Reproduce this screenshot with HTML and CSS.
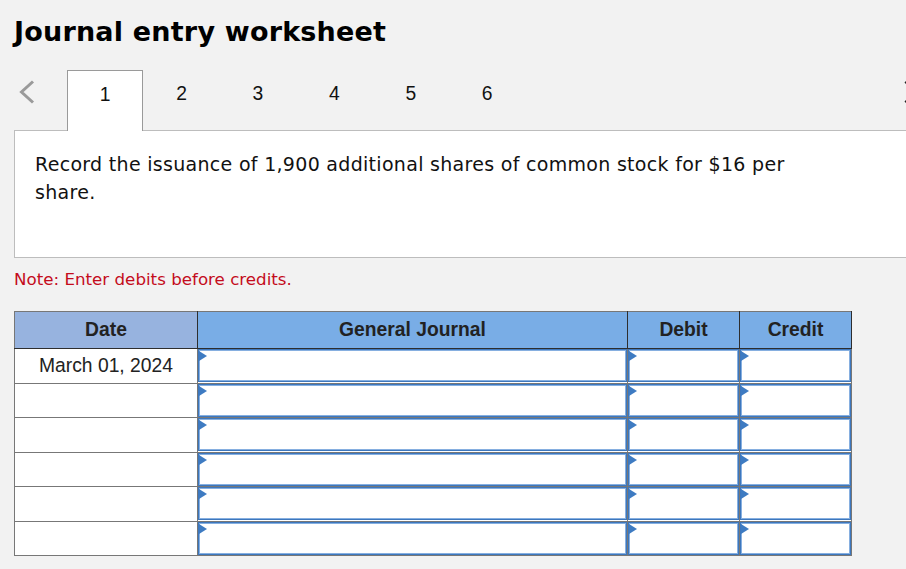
FILE: index.html
```html
<!DOCTYPE html>
<html>
<head>
<meta charset="utf-8">
<title>Journal entry worksheet</title>
<link rel="stylesheet" href="styles.css">
</head>
<body>
<div class="page">
  <h1 class="title">Journal entry worksheet</h1>
  <div class="tabs">
    <div class="nav nav-prev">
      <svg width="16" height="24" viewBox="0 0 16 24"><polyline points="14,1.5 2.5,12 14,22.5" fill="none" stroke="#9a9a9a" stroke-width="3"/></svg>
    </div>
    <div class="tab active">1</div>
    <div class="tab">2</div>
    <div class="tab">3</div>
    <div class="tab">4</div>
    <div class="tab">5</div>
    <div class="tab">6</div>
    <div class="nav nav-next">
      <svg width="16" height="24" viewBox="0 0 16 24"><polyline points="1.5,1.5 13,12 1.5,22.5" fill="none" stroke="#222" stroke-width="3"/></svg>
    </div>
  </div>
  <div class="question">
    <p class="question-text">Record the issuance of 1,900 additional shares of common stock for $16 per share.</p>
  </div>
  <p class="note">Note: Enter debits before credits.</p>
  <table class="journal">
    <colgroup>
      <col class="c-date"><col class="c-acct"><col class="c-amt"><col class="c-amt">
    </colgroup>
    <thead>
      <tr>
        <th class="h-date">Date</th>
        <th>General Journal</th>
        <th>Debit</th>
        <th>Credit</th>
      </tr>
    </thead>
    <tbody>
      <tr><td class="date">March 01, 2024</td><td class="in"><div class="field"></div></td><td class="in"><div class="field"></div></td><td class="in"><div class="field"></div></td></tr>
      <tr><td class="date"></td><td class="in"><div class="field"></div></td><td class="in"><div class="field"></div></td><td class="in"><div class="field"></div></td></tr>
      <tr><td class="date"></td><td class="in"><div class="field"></div></td><td class="in"><div class="field"></div></td><td class="in"><div class="field"></div></td></tr>
      <tr><td class="date"></td><td class="in"><div class="field"></div></td><td class="in"><div class="field"></div></td><td class="in"><div class="field"></div></td></tr>
      <tr><td class="date"></td><td class="in"><div class="field"></div></td><td class="in"><div class="field"></div></td><td class="in"><div class="field"></div></td></tr>
      <tr><td class="date"></td><td class="in"><div class="field"></div></td><td class="in"><div class="field"></div></td><td class="in"><div class="field"></div></td></tr>
    </tbody>
  </table>
</div>
</body>
</html>
```

FILE: styles.css
```css
html, body {
  margin: 0;
  padding: 0;
  background: #f2f2f2;
  overflow: hidden;
}
.page {
  padding-left: 14px;
  width: 906px;
}
.title {
  margin: 14px 0 0 0;
  font-family: "DejaVu Sans", Verdana, sans-serif;
  font-weight: bold;
  font-size: 27px;
  letter-spacing: 0.2px;
  line-height: 36px;
  color: #000;
}
.tabs {
  display: flex;
  align-items: flex-start;
  height: 60px;
  margin-top: 20px;
  position: relative;
  z-index: 1;
}
.nav {
  height: 60px;
  box-sizing: border-box;
  padding-top: 10px;
}
.nav-prev {
  width: 53px;
  padding-left: 5px;
  box-sizing: border-box;
}
.nav-next {
  margin-left: auto;
  width: 16px;
}
.tab {
  width: 76.4px;
  height: 61px;
  box-sizing: border-box;
  padding-top: 13px;
  text-align: center;
  font-family: "Liberation Sans", Arial, sans-serif;
  font-size: 19.3px;
  line-height: 22px;
  color: #111;
}
.tab.active {
  background: #fff;
  border: 1px solid #9a9a9a;
  border-bottom: none;
}
.question {
  background: #fff;
  border: 1px solid #bdbdbd;
  height: 128px;
  box-sizing: border-box;
  padding: 20px 20px 0 20px;
}
.question-text {
  margin: 0;
  max-width: 790px;
  font-family: "DejaVu Sans", Verdana, sans-serif;
  font-size: 19px;
  letter-spacing: 0.3px;
  line-height: 27.6px;
  color: #111;
}
.note {
  margin: 10px 0 0 0;
  font-family: "DejaVu Sans", Verdana, sans-serif;
  font-size: 16.7px;
  line-height: 22px;
  color: #c40c1c;
}
.journal {
  margin-top: 21px;
  border-collapse: collapse;
  table-layout: fixed;
  width: 838px;
  font-family: "Liberation Sans", Arial, sans-serif;
  font-size: 19.3px;
  color: #222;
  background: #fff;
}
.c-date { width: 183px; }
.c-acct { width: 430px; }
.c-amt { width: 112px; }
.journal th {
  height: 36px;
  padding: 0;
  background: #79ade6;
  border: 1px solid #2e2e2e;
  border-top-color: #777;
  font-weight: bold;
  text-align: center;
}
.journal th.h-date {
  background: #97b3df;
  border-left-color: #777;
}
.journal tbody tr {
  height: 34.5px;
}
.journal td {
  padding: 0;
  border: 1px solid #777;
}
.journal td.date {
  text-align: center;
  vertical-align: middle;
}
.journal td.in {
  vertical-align: top;
}
.field {
  position: relative;
  height: 33px;
  box-sizing: border-box;
  border: 1px solid #3d77bd;
  box-shadow: inset 0 0 0 1px #86afe0;
  background: #fff;
}
.field::before {
  content: "";
  position: absolute;
  left: 0;
  top: 1px;
  width: 0;
  height: 0;
  border-left: 8px solid #3e7bc2;
  border-top: 5px solid transparent;
  border-bottom: 5px solid transparent;
}
```
